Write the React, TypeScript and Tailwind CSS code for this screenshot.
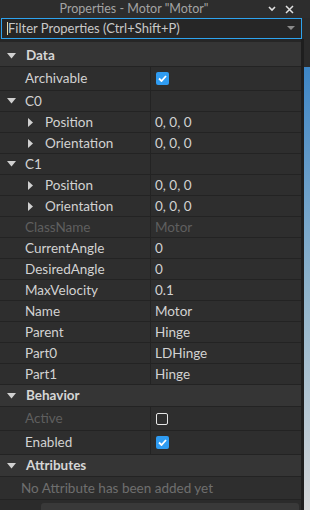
import React from "react";

const FONT = { fontFamily: "Lato, 'Open Sans', sans-serif" };

function Down({ className = "" }: { className?: string }) {
  return (
    <svg width="9" height="6" viewBox="0 0 9 6" className={className}>
      <path d="M0 0 L9 0 L4.5 5.5 Z" fill="#d0d0d0" />
    </svg>
  );
}
function Right() {
  return (
    <svg width="5" height="9" viewBox="0 0 5 9">
      <path d="M0 0 L5 4.5 L0 9 Z" fill="#d0d0d0" />
    </svg>
  );
}

function Check({ on }: { on: boolean }) {
  if (!on)
    return <div className="w-[12px] h-[12px] rounded-[2px] border border-[#e6e6e6]" />;
  return (
    <div className="w-[13px] h-[13px] rounded-[2px] bg-[#2f9cf2] flex items-center justify-center">
      <svg width="9" height="7" viewBox="0 0 9 7">
        <path d="M1 3.5 L3.5 6 L8 1" stroke="#fff" strokeWidth="1.8" fill="none" />
      </svg>
    </div>
  );
}

function Header({ label, h = "h-[22px]" }: { label: string; h?: string }) {
  return (
    <div className={`${h} flex items-center bg-[#353535] border-b border-[#232323]`}>
      <div className="w-[26px] pl-[7px] flex items-center">
        <Down />
      </div>
      <span className="text-[13.5px] font-bold text-[#d6d6d6]">{label}</span>
    </div>
  );
}

type RowProps = {
  label: string;
  value?: string;
  check?: boolean;
  indent?: 0 | 1;
  arrow?: "down" | "right";
  dim?: boolean;
  tall?: boolean;
};

function Row({ label, value, check, indent = 0, arrow, dim, tall }: RowProps) {
  const color = dim ? "text-[#5f5f5f]" : "text-[#d2d2d2]";
  return (
    <div className={`${tall ? "h-[24px]" : "h-[21px]"} flex bg-[#2e2e2e] border-b border-[#232323]`}>
      <div className="w-[151px] border-r border-[#232323] flex items-center">
        {indent === 0 ? (
          <div className="w-[25px] pl-[7px] flex items-center">{arrow === "down" && <Down />}</div>
        ) : (
          <div className="w-[45px] pl-[28px] flex items-center">
            <Right />
          </div>
        )}
        <span className={`text-[13.5px] ${color}`}>{label}</span>
      </div>
      <div className="flex-1 flex items-center pl-[4px]">
        {check !== undefined ? (
          <div className="pl-[1px]">
            <Check on={check} />
          </div>
        ) : (
          <span className={`text-[13.5px] ${color}`}>{value}</span>
        )}
      </div>
    </div>
  );
}

export default function App() {
  return (
    <div className="w-[310px] h-[510px] bg-[#2b2b2b] flex flex-col overflow-hidden" style={FONT}>
      {/* title */}
      <div className="h-[18px] flex items-center bg-[#2d2d2d] shrink-0">
        <div className="w-[268px] text-center text-[12.5px] text-[#a3a3a3] leading-none">
          Properties - Motor "Motor"
        </div>
        <div className="flex-1 flex items-center gap-[9px]">
          <svg width="8" height="6" viewBox="0 0 8 6">
            <path d="M1 1 L4 4 L7 1" stroke="#e0e0e0" strokeWidth="1.6" fill="none" />
          </svg>
          <svg width="9" height="9" viewBox="0 0 9 9">
            <path d="M1 1 L8 8 M8 1 L1 8" stroke="#e0e0e0" strokeWidth="1.5" fill="none" />
          </svg>
        </div>
      </div>
      {/* filter */}
      <div className="h-[21px] flex shrink-0">
        <div className="ml-[1px] w-[301px] h-[21px] border border-[#2ea3ee] bg-[#262626] flex items-center">
          <div className="w-[1px] h-[13px] bg-[#e8d9a0] ml-[5px]" />
          <span className="text-[13px] text-[#c8c8c8]">Filter Properties (Ctrl+Shift+P)</span>
          <div className="flex-1" />
          <svg width="8" height="5" viewBox="0 0 8 5" className="mr-[6px]">
            <path d="M0 0 L8 0 L4 4 Z" fill="#8a8a8a" />
          </svg>
        </div>
      </div>
      {/* body */}
      <div className="flex-1 flex min-h-0">
        <div className="w-[301px] flex flex-col pt-[3px] bg-[#262626]">
          <Header label="Data" h="h-[25px] pt-[3px]" />
          <Row label="Archivable" check={true} tall />
          <Row label="C0" arrow="down" />
          <Row label="Position" value="0, 0, 0" indent={1} />
          <Row label="Orientation" value="0, 0, 0" indent={1} />
          <Row label="C1" arrow="down" />
          <Row label="Position" value="0, 0, 0" indent={1} />
          <Row label="Orientation" value="0, 0, 0" indent={1} />
          <Row label="ClassName" value="Motor" dim />
          <Row label="CurrentAngle" value="0" />
          <Row label="DesiredAngle" value="0" />
          <Row label="MaxVelocity" value="0.1" />
          <Row label="Name" value="Motor" />
          <Row label="Parent" value="Hinge" />
          <Row label="Part0" value="LDHinge" />
          <Row label="Part1" value="Hinge" />
          <Header label="Behavior" />
          <Row label="Active" check={false} dim tall />
          <Row label="Enabled" check={true} tall />
          <Header label="Attributes" />
          <div className="h-[23px] flex items-center bg-[#2e2e2e] border-b border-[#232323] pl-[21px]">
            <span className="text-[13.5px] text-[#6e6e6e]">No Attribute has been added yet</span>
          </div>
          <div className="flex-1 bg-[#2b2b2b] pt-[3px] pl-[41px] pr-[2px]">
            <div className="h-full bg-[#393939] rounded-t-[3px]" />
          </div>
        </div>
        <div className="w-[3px] bg-[#1e1e1e]" />
        <div className="flex-1 flex flex-col">
          <div className="h-[28px] bg-[#2b2b2b]" />
          <div className="flex-1 bg-gradient-to-b from-[#3d86c6] via-[#8fb4cc] to-[#d6d8da]" />
        </div>
      </div>
    </div>
  );
}
